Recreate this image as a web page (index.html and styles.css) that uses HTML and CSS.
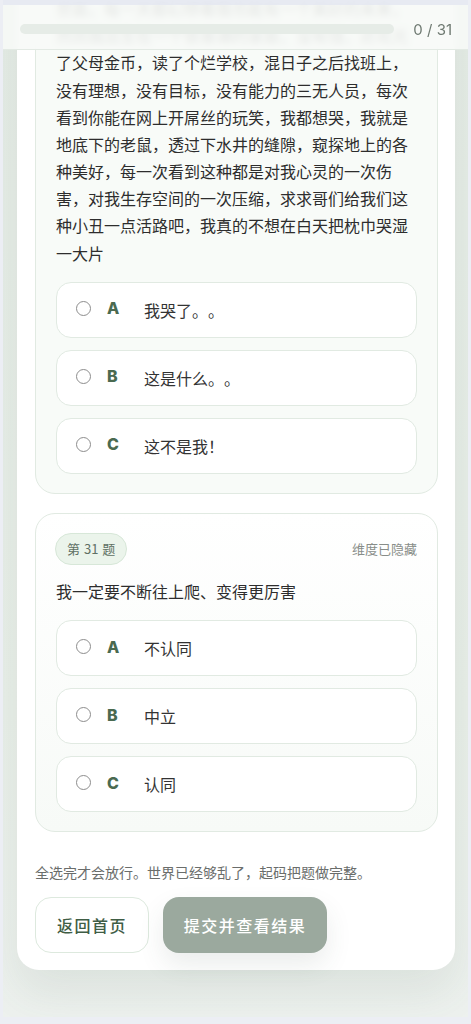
FILE: index.html
```html
<!DOCTYPE html>
<html lang="zh-CN">
<head>
<meta charset="utf-8">
<title>测试</title>
<link rel="stylesheet" href="styles.css">
</head>
<body>
<header class="topbar">
  <div class="progress"><div class="progress-fill" style="width:0%"></div></div>
  <span class="count">0 / 31</span>
</header>
<div class="panel">
  <main class="sheet">
    <section class="q-card q-card-tint">
      <div class="q-head">
        <span class="badge">第 30 题</span>
        <span class="dim">维度已隐藏</span>
      </div>
      <p class="q-text">我是一个从小在农村长大的普通人，没有见过什么世面，每一天都幻想着我也能有一个美好的未来，然而我出生在一个很普通的家庭，没有钱，还花光了父母金币，读了个烂学校，混日子之后找班上，没有理想，没有目标，没有能力的三无人员，每次看到你能在网上开屌丝的玩笑，我都想哭，我就是地底下的老鼠，透过下水井的缝隙，窥探地上的各种美好，每一次看到这种都是对我心灵的一次伤害，对我生存空间的一次压缩，求求哥们给我们这种小丑一点活路吧，我真的不想在白天把枕巾哭湿一大片</p>
      <div class="options">
        <label class="option"><span class="radio"></span><span class="letter">A</span><span class="opt-text">我哭了。。</span></label>
        <label class="option"><span class="radio"></span><span class="letter">B</span><span class="opt-text">这是什么。。</span></label>
        <label class="option"><span class="radio"></span><span class="letter">C</span><span class="opt-text">这不是我！</span></label>
      </div>
    </section>
    <section class="q-card">
      <div class="q-head">
        <span class="badge">第 31 题</span>
        <span class="dim">维度已隐藏</span>
      </div>
      <p class="q-text">我一定要不断往上爬、变得更厉害</p>
      <div class="options">
        <label class="option"><span class="radio"></span><span class="letter">A</span><span class="opt-text">不认同</span></label>
        <label class="option"><span class="radio"></span><span class="letter">B</span><span class="opt-text">中立</span></label>
        <label class="option"><span class="radio"></span><span class="letter">C</span><span class="opt-text">认同</span></label>
      </div>
    </section>
    <p class="note">全选完才会放行。世界已经够乱了，起码把题做完整。</p>
    <div class="actions">
      <button class="btn btn-ghost" type="button">返回首页</button>
      <button class="btn btn-primary" type="button" disabled>提交并查看结果</button>
    </div>
  </main>
</div>
</body>
</html>
```
FILE: styles.css
```css
* { box-sizing: border-box; }
html, body { height: 100%; }
body {
  margin: 0;
  background: #eceef4;
  overflow: hidden;
  font-family: "Noto Sans CJK SC", "Noto Sans", sans-serif;
  color: #2f2f2f;
  text-spacing-trim: space-all;
}
.panel {
  margin: 0 3px;
  height: calc(100vh - 7px);
  overflow: hidden;
  display: flex;
  flex-direction: column;
  justify-content: flex-end;
  padding-bottom: 47px;
  background: linear-gradient(180deg, #e5ece6 0%, #e9efe9 70%, #edf1ee 100%);
}
.topbar {
  position: fixed;
  top: 0;
  left: 3px;
  right: 3px;
  height: 50px;
  z-index: 10;
  display: flex;
  align-items: center;
  gap: 19px;
  padding: 4px 16px 0 17px;
  background: rgba(247, 249, 247, 0.9);
  backdrop-filter: blur(3px);
  border-top: 5px solid rgba(228, 231, 241, 0.85);
  border-bottom: 1px solid rgba(225, 232, 226, 0.9);
}
.progress {
  flex: 1;
  height: 10px;
  border-radius: 5px;
  background: #e6ece7;
  overflow: hidden;
}
.progress-fill { height: 100%; background: #7f9b84; }
.count {
  font-family: Inter, "Liberation Sans", sans-serif;
  font-size: 15px;
  color: #6f7a72;
  white-space: nowrap;
}
.sheet {
  flex-shrink: 0;
  margin: 0 13px 0 14px;
  background: #fff;
  border-radius: 22px;
  padding: 18px 17px 17px 18px;
  box-shadow: 0 22px 44px rgba(70, 100, 75, 0.10);
}
.q-card {
  border: 1px solid #e1eae2;
  border-radius: 20px;
  padding: 19px 20px;
  background: linear-gradient(180deg, #ffffff 0%, #f7faf7 100%);
}
.q-card-tint { background: #f8fbf8; }
.q-card + .q-card { margin-top: 19px; }
.q-head {
  display: flex;
  align-items: center;
  justify-content: space-between;
  margin-bottom: 13px;
}
.badge {
  height: 32px;
  line-height: 30px;
  padding: 0 11px;
  margin-left: -1px;
  border: 1px solid #d7e7d8;
  border-radius: 16px;
  background: #ebf4eb;
  font-size: 13px;
  color: #5f7064;
  word-spacing: 1px;
}
.dim { font-size: 13px; color: #888d89; }
.q-text {
  margin: 0 0 15px;
  font-size: 16px;
  line-height: 1.7;
  color: #2d2d2d;
}
.options { display: flex; flex-direction: column; gap: 12px; }
.option {
  display: flex;
  align-items: center;
  height: 56px;
  padding: 0 19px;
  border: 1px solid #e1eae2;
  border-radius: 15px;
  background: #fff;
}
.radio {
  width: 15px;
  height: 15px;
  border: 1.5px solid #8d8d8d;
  border-radius: 50%;
  margin-right: 16px;
  margin-top: -3px;
  flex-shrink: 0;
}
.letter {
  width: 37px;
  font-family: Inter, "Liberation Sans", sans-serif;
  font-weight: 800;
  font-size: 16px;
  color: #4a6a50;
  margin-top: -3px;
}
.opt-text { font-size: 16px; color: #333; }
.note {
  margin: 29px 0 14px;
  font-size: 14px;
  line-height: 22px;
  color: #6a6d6b;
}
.actions { display: flex; gap: 14px; }
.btn {
  height: 56px;
  border-radius: 16px;
  font-family: "Noto Sans CJK SC", sans-serif;
  font-size: 16px;
  font-weight: 500;
  letter-spacing: 1.5px;
}
.btn-ghost {
  width: 114px;
  background: #fff;
  border: 1px solid #dde9de;
  color: #3f5d45;
}
.btn-primary {
  width: 164px;
  background: #9ba99e;
  border: none;
  color: #fff;
  box-shadow: 0 12px 26px rgba(60, 80, 65, 0.10);
}
```
